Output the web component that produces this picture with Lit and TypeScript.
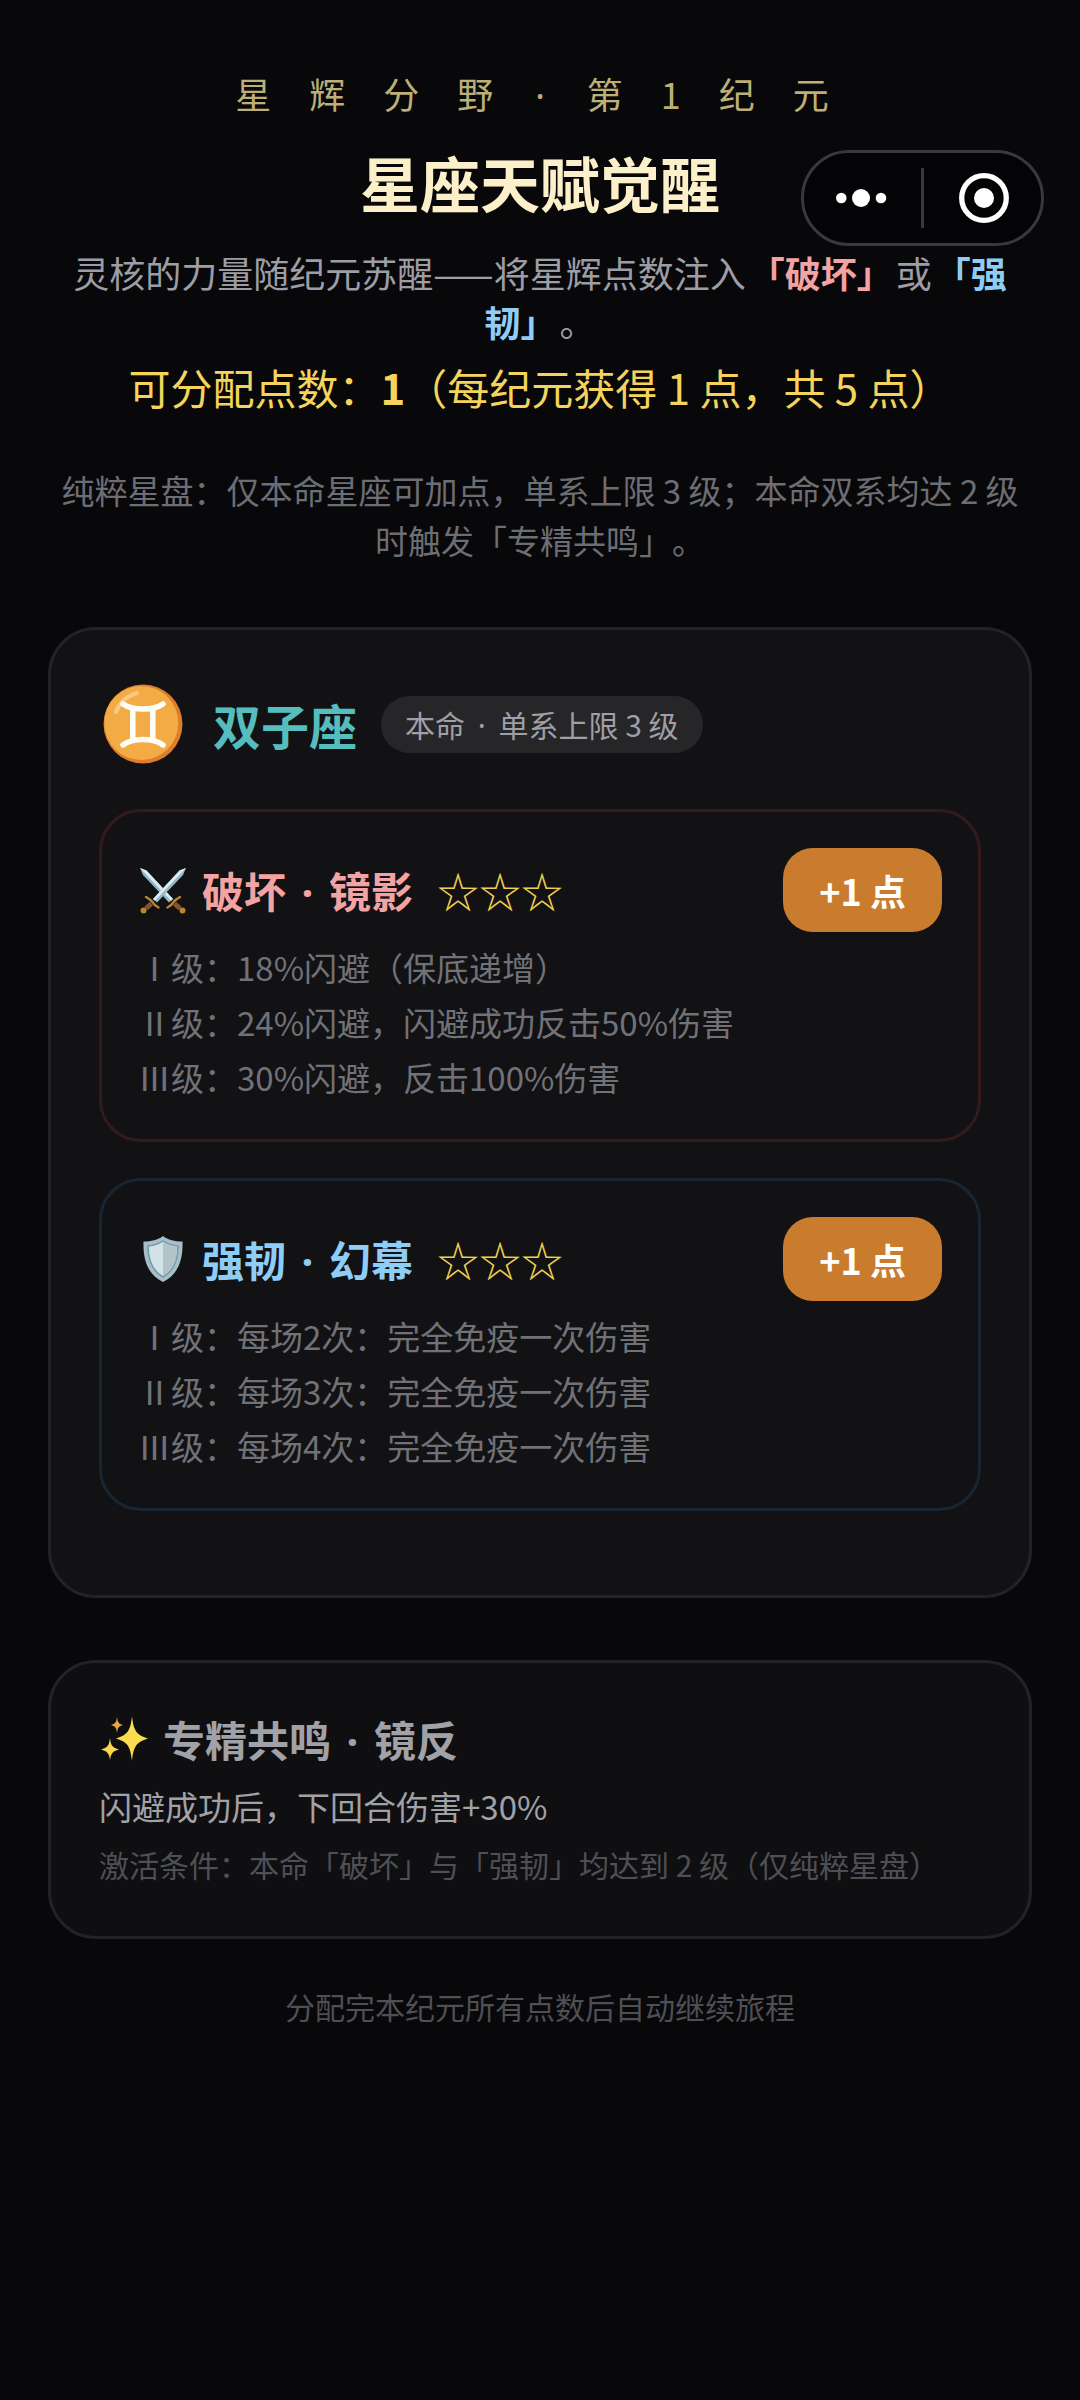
import { LitElement, html, css, svg } from "lit";
import { customElement, property } from "lit/decorators.js";

type Kind = "ruin" | "ward";

interface Talent {
  kind: Kind;
  school: string;
  name: string;
  tiers: string[];
}

const talents: Talent[] = [
  {
    kind: "ruin",
    school: "破坏",
    name: "镜影",
    tiers: [
      "Ⅰ级：18%闪避（保底递增）",
      "Ⅱ级：24%闪避，闪避成功反击50%伤害",
      "Ⅲ级：30%闪避，反击100%伤害",
    ],
  },
  {
    kind: "ward",
    school: "强韧",
    name: "幻幕",
    tiers: [
      "Ⅰ级：每场2次：完全免疫一次伤害",
      "Ⅱ级：每场3次：完全免疫一次伤害",
      "Ⅲ级：每场4次：完全免疫一次伤害",
    ],
  },
];

// Shared by both elements: the separator dot and the heading glyphs.
const shared = css`
  .dot {
    display: inline-block;
    padding: 0 6px;
    text-align: center;
    font-family: "Noto Sans", sans-serif;
    line-height: 1;
  }
  .glyph {
    flex: none;
    width: 48px;
    height: 48px;
    margin: 0 15px 0 1px;
  }
`;

const dot = html`<span class="dot">·</span>`;

const sword = svg`
  <path d="M1 2 L7.500 4.500 L34 33 L30 36.500 L4 9 Z" fill="#94b8c4"/>
  <path d="M1 2 L7.500 4.500 L34 33 L32 34.800 Z" fill="#d9edf3"/>
  <path d="M35.500 37.500 L41 42.500" stroke="#8a4f35" stroke-width="5"/>
  <circle cx="43.500" cy="44.500" r="3" fill="#b8862f"/>
  <path d="M28.500 41.500 Q33 39 34.500 36 Q36.500 33.500 41 31" fill="none" stroke="#b8862f" stroke-width="2.400" stroke-linecap="round"/>`;

const swordsIcon = html`<svg class="glyph" viewBox="0 0 48 48" aria-hidden="true">
  <g>${sword}</g>
  <g transform="matrix(-1 0 0 1 48 0)">${sword}</g>
</svg>`;

const shieldIcon = html`<svg class="glyph" viewBox="0 0 48 48" aria-hidden="true">
  <path d="M24 1 C19 5 12 6.500 4.500 6.500 C4 24 8 39 24 47 C40 39 44 24 43.500 6.500 C36 6.500 29 5 24 1 Z" fill="#a9bec8"/>
  <path d="M24 6 C19.500 9 14.500 10.500 9 11 C9 25 12.500 35.500 24 42 C35.500 35.500 39 25 39 11 C33.500 10.500 28.500 9 24 6 Z" fill="#d3e2e6" stroke="#6f9aae" stroke-width="1.500"/>
  <path d="M24 7 C28.500 10 33 11.200 38 11.700 C38 25 34.500 35 24 41 Z" fill="#b4c3c8"/>
</svg>`;

const sparkIcon = html`<svg class="glyph" viewBox="0 0 48 48" aria-hidden="true">
  <path d="M32 1 C33.500 15 36 20 48 23.500 C36 27 33.500 32 32 46 C30.500 32 28 27 16 23.500 C28 20 30.500 15 32 1 Z" fill="#fbdc4f"/>
  <path d="M10 23 C11 31 12.500 32.500 19 34.500 C12.500 36.500 11 38 10 45 C9 38 7.500 36.500 1 34.500 C7.500 32.500 9 31 10 23 Z" fill="#fbd84a"/>
  <path d="M17 2 C17.700 7.500 18.800 8.800 23 10 C18.800 11.200 17.700 12.500 17 18 C16.300 12.500 15.200 11.200 11 10 C15.200 8.800 16.300 7.500 17 2 Z" fill="#e9a93c"/>
</svg>`;

const geminiIcon = html`<svg class="sign" viewBox="0 0 80 80" role="img" aria-label="双子座">
  <circle cx="40" cy="40" r="39.500" fill="#dd7e2d"/>
  <circle cx="38.300" cy="39" r="37" fill="#f3ab46"/>
  <path d="M13 28 Q18 14 34 9" fill="none" stroke="#f9c884" stroke-width="4" stroke-linecap="round"/>
  <g fill="none" stroke="#fffdf8" stroke-width="5.500" stroke-linecap="round">
    <path d="M20 20 Q27 25 40 25 Q53 25 60 20"/>
    <path d="M20 61 Q27 55.500 40 55.500 Q53 55.500 60 61"/>
    <path d="M29.800 25 V56 M49.800 25 V56"/>
  </g>
</svg>`;

@customElement("talent-panel")
export class TalentPanel extends LitElement {
  @property({ attribute: false }) talent!: Talent;

  static styles = [
    shared,
    css`
      :host {
        display: block;
      }
      .panel {
        border: 3px solid #351a1d;
        border-radius: 42px;
        padding: 36px 36px 34px;
      }
      .panel.ward {
        border-color: #172632;
      }
      .head {
        display: flex;
        align-items: center;
        margin-bottom: 8px;
      }
      .title {
        margin: 0;
        font-size: 42px;
        line-height: 60px;
        font-weight: 700;
        color: #f3a3a4;
      }
      .ward .title {
        color: #8ecdf6;
      }
      .stars {
        margin-left: 24px;
        font-size: 42px;
        line-height: 60px;
        color: #f0d050;
      }
      .add {
        margin-left: auto;
        border: 0;
        border-radius: 30px;
        padding: 0 36px;
        height: 84px;
        background: #ca7c2e;
        color: #fff;
        font: inherit;
        font-size: 36px;
        font-weight: 700;
      }
      .tiers {
        margin: 0;
        padding: 0;
        list-style: none;
        font-size: 33px;
        line-height: 55px;
        color: #717178;
      }
    `,
  ];

  render() {
    const { kind, school, name, tiers } = this.talent;
    return html`<section class="panel ${kind}">
      <div class="head">
        ${kind === "ruin" ? swordsIcon : shieldIcon}
        <h3 class="title">${school} ${dot} ${name}</h3>
        <span class="stars">☆☆☆</span>
        <button class="add" type="button">+1 点</button>
      </div>
      <ul class="tiers">
        ${tiers.map((t) => html`<li>${t}</li>`)}
      </ul>
    </section>`;
  }
}

@customElement("app-root")
export class AppRoot extends LitElement {
  static styles = [
    shared,
    css`
      :host {
        display: block;
        position: relative;
        box-sizing: border-box;
        min-height: 100vh;
        padding: 66px 48px 48px;
        background: #08080a;
        color: #a1a1a8;
        font-family: "Noto Sans CJK SC", sans-serif;
        text-spacing-trim: space-all;
      }
      .intro {
        text-align: center;
      }
      .intro p,
      .intro h1 {
        margin: 0;
      }
      .intro .era {
        padding-left: 22px;
        font-size: 36px;
        line-height: 54px;
        letter-spacing: 38px;
        color: #bdb077;
      }
      .era .dot {
        padding: 0 4px;
      }
      .intro .name {
        margin-top: 17px;
        font-size: 60px;
        line-height: 90px;
        font-weight: 700;
        color: #fcf0cb;
      }
      .intro .lead {
        margin-top: 21px;
        font-size: 36px;
        line-height: 49px;
        color: #9d9da5;
      }
      .lead b {
        margin: 0 3px;
      }
      .ruin {
        color: #f3a3a4;
      }
      .ward {
        color: #8ecdf6;
      }
      .intro .points {
        margin-top: 11px;
        font-size: 42px;
        line-height: 60px;
        color: #f5d35c;
      }
      .intro .rule {
        margin-top: 48px;
        font-size: 33px;
        line-height: 50px;
        color: #6d6d74;
      }
      .capsule {
        position: absolute;
        top: 150px;
        right: 36px;
        display: flex;
        align-items: center;
        box-sizing: border-box;
        width: 243px;
        height: 96px;
        border: 3px solid #39393b;
        border-radius: 48px;
        background: #040406;
      }
      .cap-btn {
        flex: 1;
        display: flex;
        align-items: center;
        justify-content: center;
        height: 100%;
        padding: 0;
        border: 0;
        background: none;
      }
      .cap-icon {
        width: 54px;
        height: 54px;
      }
      .cap-line {
        width: 3px;
        height: 60px;
        background: #39393b;
      }
      .card {
        margin-top: 62px;
        padding: 48px;
        border: 3px solid #232325;
        border-radius: 48px;
        background: #121214;
      }
      .card-head {
        display: flex;
        align-items: center;
        min-height: 92px;
        margin-bottom: 39px;
      }
      .sign {
        flex: none;
        width: 80px;
        height: 80px;
        margin: 0 30px 0 4px;
      }
      .sign-name {
        margin: 0;
        font-size: 48px;
        line-height: 72px;
        color: #55bdbd;
      }
      .badge {
        margin-left: 24px;
        padding: 0 24px;
        border-radius: 29px;
        background: #262628;
        font-size: 30px;
        line-height: 57px;
        color: #9f9fa5;
      }
      .panel {
        margin-bottom: 36px;
      }
      .resonance {
        background: #0f0f11;
      }
      .res-title {
        display: flex;
        align-items: center;
        margin: 0 0 12px;
        font-size: 42px;
        line-height: 56px;
        color: #a1a1a8;
      }
      .effect {
        margin: 0 0 6px;
        font-size: 33px;
        line-height: 55px;
      }
      .cond {
        margin: 0;
        font-size: 30px;
        line-height: 48px;
        color: #4f4f56;
      }
      .foot {
        margin: 43px 0 0;
        text-align: center;
        font-size: 30px;
        line-height: 48px;
        color: #4f4f54;
      }
    `,
  ];

  render() {
    return html`
      <div class="capsule">
        <button class="cap-btn" type="button" aria-label="更多">
          <svg class="cap-icon" viewBox="0 0 54 54" fill="#fff" aria-hidden="true">
            <circle cx="5.300" cy="27" r="5.300" />
            <circle cx="25" cy="27" r="9" />
            <circle cx="45" cy="27" r="5.300" />
          </svg>
        </button>
        <span class="cap-line"></span>
        <button class="cap-btn" type="button" aria-label="关闭">
          <svg class="cap-icon" viewBox="0 0 54 54" fill="#fff" aria-hidden="true">
            <circle cx="28" cy="27" r="22.300" fill="none" stroke="#fff" stroke-width="5.300" />
            <circle cx="28" cy="27" r="10" />
          </svg>
        </button>
      </div>
      <header class="intro">
        <p class="era">星辉分野${dot}第1纪元</p>
        <h1 class="name">星座天赋觉醒</h1>
        <p class="lead">灵核的力量随纪元苏醒——将星辉点数注入<b class="ruin">「破坏」</b>或<b class="ward">「强韧」</b>。</p>
        <p class="points">可分配点数：<b>1</b>（每纪元获得 1 点，共 5 点）</p>
        <p class="rule">纯粹星盘：仅本命星座可加点，单系上限 3 级；本命双系均达 2 级时触发「专精共鸣」。</p>
      </header>
      <main>
        <section class="card">
          <div class="card-head">
            ${geminiIcon}
            <h2 class="sign-name">双子座</h2>
            <span class="badge">本命 ${dot} 单系上限 3 级</span>
          </div>
          ${talents.map((t) => html`<talent-panel class="panel" .talent=${t}></talent-panel>`)}
        </section>
        <section class="card resonance">
          <h2 class="res-title">${sparkIcon}<span>专精共鸣 ${dot} 镜反</span></h2>
          <p class="effect">闪避成功后，下回合伤害+30%</p>
          <p class="cond">激活条件：本命「破坏」与「强韧」均达到 2 级（仅纯粹星盘）</p>
        </section>
      </main>
      <p class="foot">分配完本纪元所有点数后自动继续旅程</p>
    `;
  }
}
